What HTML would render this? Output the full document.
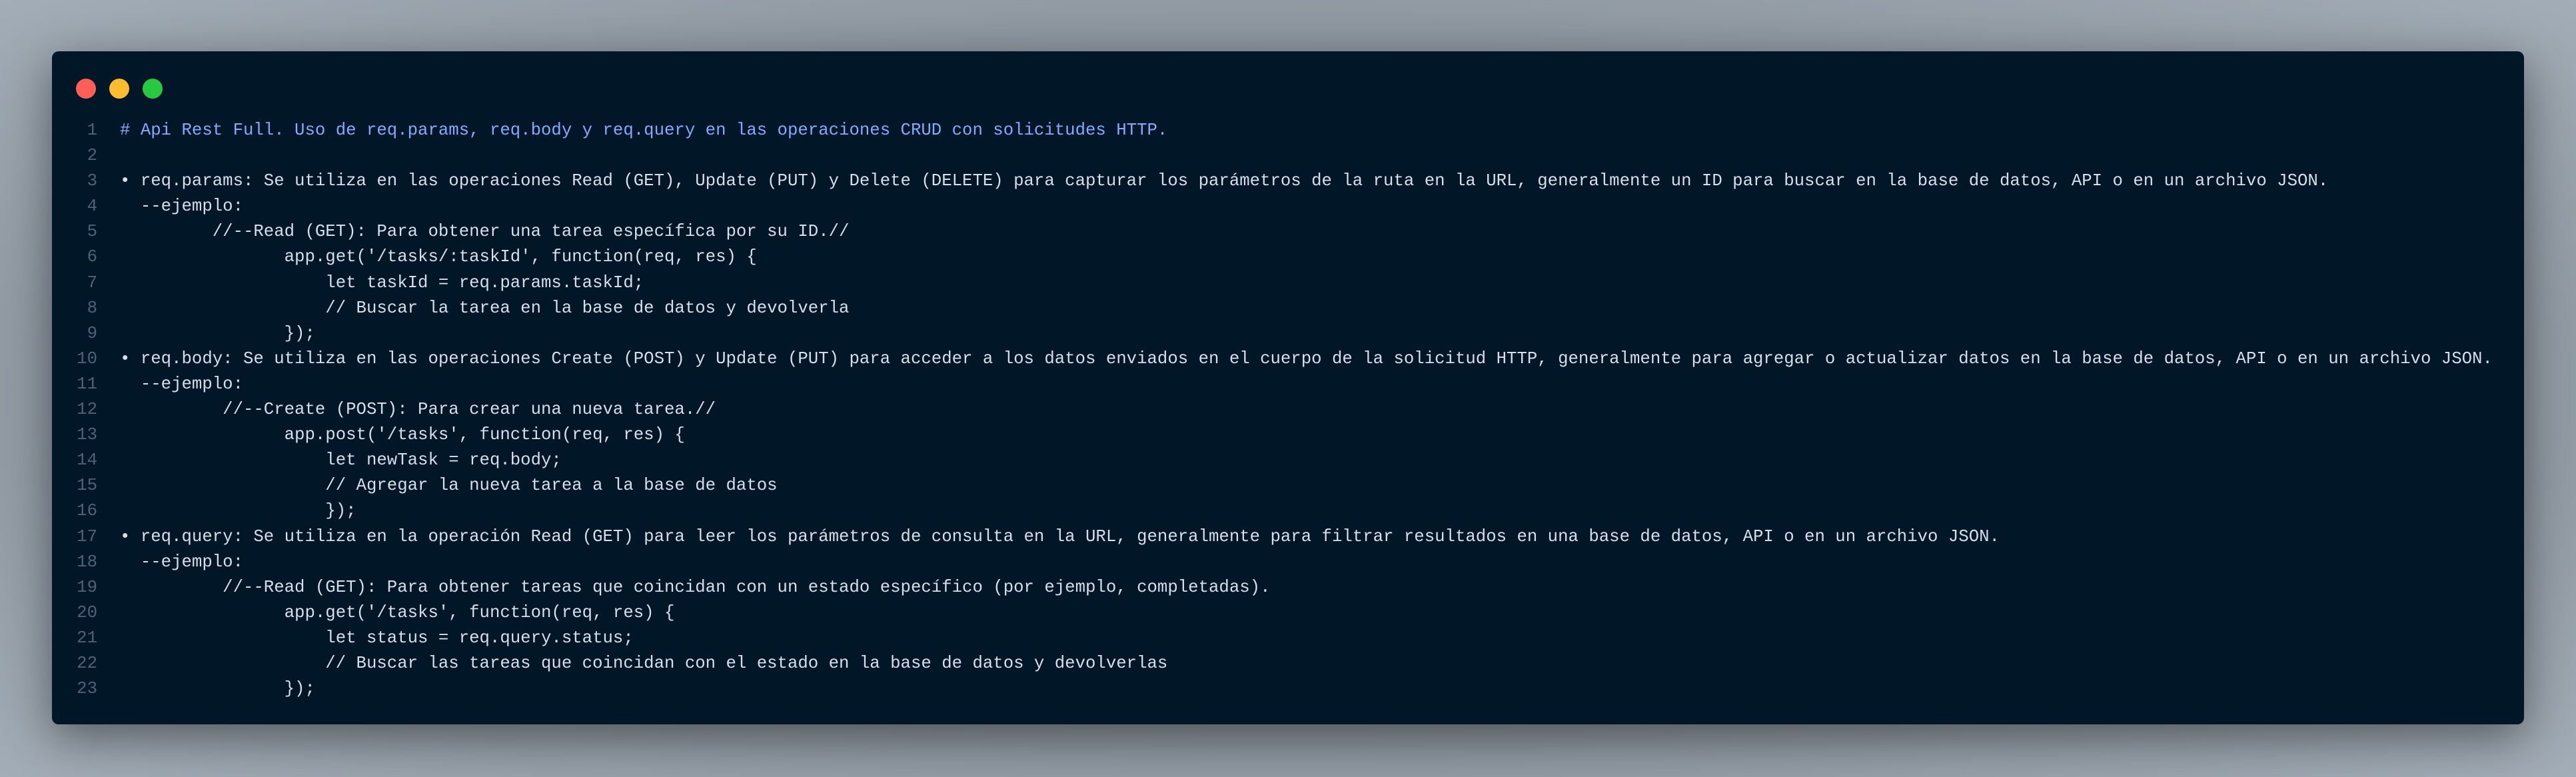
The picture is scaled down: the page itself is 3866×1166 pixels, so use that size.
<!DOCTYPE html>
<html><head><meta charset="utf-8"><style>
html,body{margin:0;padding:0;}
body{width:3866px;height:1166px;overflow:hidden;background:radial-gradient(ellipse at 50% 50%,#6f7780 0%,#8b949d 60%,#a3adb7 100%);position:relative;font-family:"Liberation Mono","DejaVu Sans Mono",monospace;}
.win{position:absolute;left:78px;top:77px;width:3710px;height:1010px;background:#011627;border-radius:10px;box-shadow:0 20px 70px rgba(0,0,0,0.45);}
.dot{position:absolute;top:41px;width:30px;height:30px;border-radius:50%;}
.ln{position:absolute;left:0;width:68px;text-align:right;color:#4b6479;font-size:25.7px;line-height:38.1px;white-space:pre;}
.code{position:absolute;left:102px;color:#d6deeb;font-size:25.7px;line-height:38.1px;white-space:pre;margin:0;font-family:inherit;}
.h{color:#82aaff;}
</style></head><body>
<div class="win">
<div class="dot" style="left:36px;background:#ff5f57"></div>
<div class="dot" style="left:86px;background:#febc2e"></div>
<div class="dot" style="left:136px;background:#28c840"></div>
<div class="ln" style="top:100px">1
2
3
4
5
6
7
8
9
10
11
12
13
14
15
16
17
18
19
20
21
22
23</div>
<pre class="code" style="top:100px"><span class="h"># Api Rest Full. Uso de req.params, req.body y req.query en las operaciones CRUD con solicitudes HTTP.</span>

• req.params: Se utiliza en las operaciones Read (GET), Update (PUT) y Delete (DELETE) para capturar los parámetros de la ruta en la URL, generalmente un ID para buscar en la base de datos, API o en un archivo JSON.
  --ejemplo:
         //--Read (GET): Para obtener una tarea específica por su ID.//
                app.get('/tasks/:taskId', function(req, res) {
                    let taskId = req.params.taskId;
                    // Buscar la tarea en la base de datos y devolverla
                });
• req.body: Se utiliza en las operaciones Create (POST) y Update (PUT) para acceder a los datos enviados en el cuerpo de la solicitud HTTP, generalmente para agregar o actualizar datos en la base de datos, API o en un archivo JSON.
  --ejemplo:
          //--Create (POST): Para crear una nueva tarea.//
                app.post('/tasks', function(req, res) {
                    let newTask = req.body;
                    // Agregar la nueva tarea a la base de datos
                    });
• req.query: Se utiliza en la operación Read (GET) para leer los parámetros de consulta en la URL, generalmente para filtrar resultados en una base de datos, API o en un archivo JSON.
  --ejemplo:
          //--Read (GET): Para obtener tareas que coincidan con un estado específico (por ejemplo, completadas).
                app.get('/tasks', function(req, res) {
                    let status = req.query.status;
                    // Buscar las tareas que coincidan con el estado en la base de datos y devolverlas
                });</pre>
</div>
</body></html>
